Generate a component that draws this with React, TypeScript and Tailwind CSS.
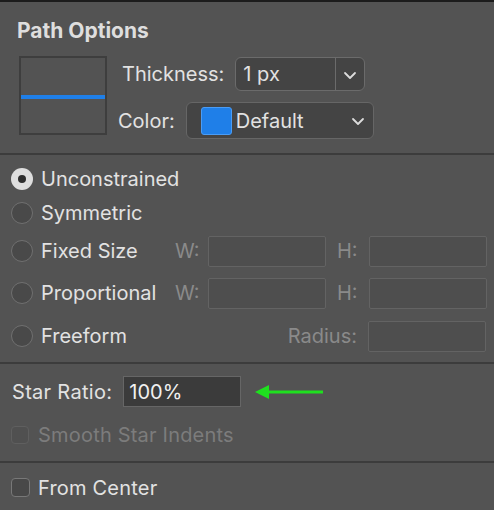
import React from "react";

const font = { fontFamily: "Inter, 'Noto Sans', sans-serif" };

function Chevron({ className = "" }: { className?: string }) {
  return (
    <svg width="14" height="9" viewBox="0 0 14 9" className={className}>
      <path d="M2 2 L7 7 L12 2" stroke="#dcdcdc" strokeWidth="1.8" fill="none" strokeLinecap="round" strokeLinejoin="round" />
    </svg>
  );
}

function Radio({ checked = false }: { checked?: boolean }) {
  return checked ? (
    <div className="w-[22px] h-[22px] rounded-full bg-[#dedede] flex items-center justify-center shrink-0">
      <div className="w-[8px] h-[8px] rounded-full bg-[#2e2e2e]" />
    </div>
  ) : (
    <div className="w-[22px] h-[22px] rounded-full bg-[#494949] border-[1.5px] border-[#707070] shrink-0" />
  );
}

function DisabledInput() {
  return <div className="w-[118px] h-[31px] bg-[#4e4e4e] border-[1.5px] border-[#636363] rounded-[2px]" />;
}

export default function App() {
  return (
    <div style={font} className="w-[494px] h-[510px] bg-[#535353] border-t-2 border-[#1c1c1c] flex flex-col text-[#e2e2e2] text-[20px] leading-[24px] overflow-hidden">
      {/* Section 1 */}
      <div className="h-[151px] pl-[17px] pt-[17px] flex flex-col shrink-0">
        <div className="font-bold text-[21px] leading-[24px] text-[#dedede]">Path Options</div>
        <div className="flex mt-[13px]">
          <div className="ml-[2px] w-[88px] h-[79px] border-2 border-[#3e3e3e] flex items-center">
            <div className="w-full h-[4px] bg-[#1f7fe8] mt-[2px]" />
          </div>
          <div className="flex flex-col">
            <div className="flex items-center h-[34px] mt-[1px]">
              <span className="ml-[15px] mr-[11px]">Thickness:</span>
              <div className="w-[130px] h-[34px] bg-[#444444] border border-[#6b6b6b] rounded-[6px] flex">
                <div className="flex-1 flex items-center pl-[7px] border-r border-[#6b6b6b]">1 px</div>
                <div className="w-[28px] flex items-center justify-center pt-[2px]">
                  <Chevron />
                </div>
              </div>
            </div>
            <div className="flex items-center h-[37px] mt-[11px]">
              <span className="ml-[11px] mr-[11px]">Color:</span>
              <div className="w-[188px] h-[37px] bg-[#444444] border border-[#666666] rounded-[6px] flex items-center">
                <div className="ml-[14px] w-[31px] h-[28px] rounded-[3px] bg-[#1f7fe8] border border-[#4a9cf5]" />
                <span className="ml-[4px] flex-1">Default</span>
                <Chevron className="mr-[8px] mt-[2px]" />
              </div>
            </div>
          </div>
        </div>
      </div>
      <div className="h-[2px] bg-[#3c3c3c] shrink-0" />

      {/* Section 2 */}
      <div className="pt-[7px] pl-[11px] flex flex-col shrink-0 h-[207px]">
        <div className="flex items-center h-[34px]">
          <Radio checked />
          <span className="ml-[8px]">Unconstrained</span>
        </div>
        <div className="flex items-center h-[34px]">
          <Radio />
          <span className="ml-[8px]">Symmetric</span>
        </div>
        <div className="flex items-center h-[42px]">
          <Radio />
          <span className="ml-[8px] w-[134px]">Fixed Size</span>
          <span className="text-[#8a8a8a] w-[33px]">W:</span>
          <DisabledInput />
          <span className="text-[#8a8a8a] ml-[11px] w-[32px]">H:</span>
          <DisabledInput />
        </div>
        <div className="flex items-center h-[42px]">
          <Radio />
          <span className="ml-[8px] w-[134px]">Proportional</span>
          <span className="text-[#8a8a8a] w-[33px]">W:</span>
          <DisabledInput />
          <span className="text-[#8a8a8a] ml-[11px] w-[32px]">H:</span>
          <DisabledInput />
        </div>
        <div className="flex items-center h-[44px]">
          <Radio />
          <span className="ml-[8px] flex-1">Freeform</span>
          <span className="text-[#8a8a8a] mr-[11px]">Radius:</span>
          <div className="mr-[8px]">
            <DisabledInput />
          </div>
        </div>
      </div>
      <div className="h-[2px] bg-[#3c3c3c] shrink-0" />

      {/* Section 3 */}
      <div className="h-[97px] pl-[12px] flex flex-col shrink-0">
        <div className="flex items-center h-[31px] mt-[12px]">
          <span className="tracking-[0.3px]">Star Ratio:</span>
          <div className="ml-[11px] w-[118px] h-[31px] bg-[#3b3b3b] border-[1.5px] border-[#666666] flex items-center pl-[5px] text-[#f0f0f0]">
            100%
          </div>
          <svg width="72" height="16" viewBox="0 0 72 16" className="ml-[13px]">
            <path d="M14 8 L69 8" stroke="#1fe01f" strokeWidth="3" />
            <path d="M1 8 L15 1 L15 15 Z" fill="#1fe01f" />
          </svg>
        </div>
        <div className="flex items-center mt-[15px] h-[26px]">
          <div className="w-[18px] h-[18px] rounded-[4px] border-[1.5px] border-[#5f5f5f] bg-[#505050] ml-[-1px]" />
          <span className="ml-[9px] text-[#7c7c7c] tracking-[0.2px]">Smooth Star Indents</span>
        </div>
      </div>
      <div className="h-[2px] bg-[#3c3c3c] shrink-0" />

      {/* Section 4 */}
      <div className="pl-[11px] pt-[3px] flex items-center h-[46px] shrink-0">
        <div className="w-[19px] h-[19px] rounded-[4px] border-[1.5px] border-[#787878] bg-[#484848]" />
        <span className="ml-[8px] tracking-[0.2px]">From Center</span>
      </div>
    </div>
  );
}
